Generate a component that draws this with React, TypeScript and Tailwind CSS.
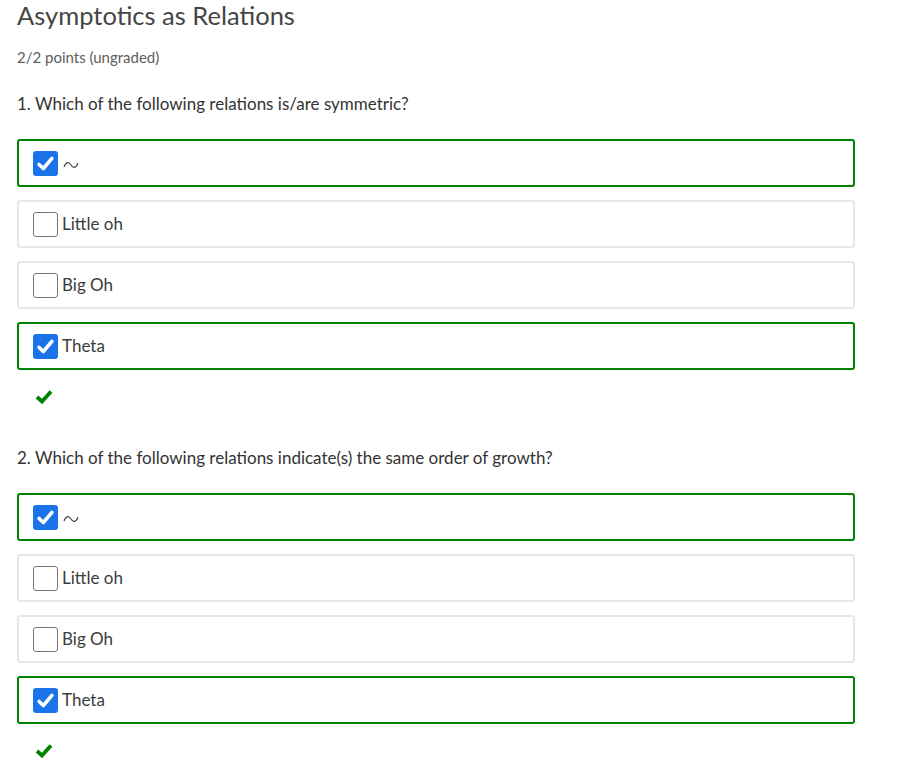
import React from "react";

type Opt = { label: string; checked: boolean; tilde?: boolean };

const q1: Opt[] = [
  { label: "~", checked: true, tilde: true },
  { label: "Little oh", checked: false },
  { label: "Big Oh", checked: false },
  { label: "Theta", checked: true },
];

function Box({ checked }: { checked: boolean }) {
  if (checked) {
    return (
      <span className="w-[25px] h-[25px] rounded-[3px] bg-[#1a73e8] flex items-center justify-center shrink-0">
        <svg width="19" height="19" viewBox="0 0 16 16">
          <path d="M2.6 8.8 L6.2 12.2 L13.4 3.6" fill="none" stroke="#fff" strokeWidth="3" strokeLinecap="round" strokeLinejoin="round" />
        </svg>
      </span>
    );
  }
  return <span className="w-[25px] h-[25px] rounded-[3px] border border-[#767676] bg-white shrink-0" />;
}

function Option({ o }: { o: Opt }) {
  return (
    <div
      className={
        "h-[48px] rounded-[3px] border-2 flex items-center pl-[14px] gap-[4px] " +
        (o.checked ? "border-[#008100]" : "border-[#e7e7e7]")
      }
    >
      <Box checked={o.checked} />
      {o.tilde ? (
        <svg width="16" height="10" viewBox="0 0 16 10" className="ml-[1px] mt-[4px]">
          <path d="M1 7 C3 1.5 6 1.5 8 5 C10 8.5 13 8.5 15 3" fill="none" stroke="#444" strokeWidth="1.1" />
        </svg>
      ) : (
        <span className="text-[17px] text-[#3c3c3c]">{o.label}</span>
      )}
    </div>
  );
}

function Check() {
  return (
    <div className="pl-[18px] mt-[18px]">
      <svg width="18" height="16" viewBox="0 0 18 16">
        <path d="M2 9 L7 13.5 L16 3.5" fill="none" stroke="#008100" strokeWidth="3.8" strokeLinecap="butt" strokeLinejoin="miter" />
      </svg>
    </div>
  );
}

function Question({ title, opts }: { title: string; opts: Opt[] }) {
  return (
    <div>
      <div className="text-[17px] text-[#333] leading-[20px]">{title}</div>
      <div className="mt-[25px] flex flex-col gap-[13px]">
        {opts.map((o, i) => (
          <Option key={i} o={o} />
        ))}
      </div>
      <Check />
    </div>
  );
}

export default function App() {
  return (
    <div className="w-[901px] h-[763px] bg-white overflow-hidden" style={{ fontFamily: '"Lato", "Noto Sans", sans-serif' }}>
      <div className="w-[838px] ml-[17px]">
        <h1 className="text-[25.5px] leading-[30px] text-[#454545]">Asymptotics as Relations</h1>
        <div className="text-[15px] text-[#5e5e5e] mt-[18px] leading-[18px]">2/2 points (ungraded)</div>
        <div className="mt-[28px]">
          <Question title="1. Which of the following relations is/are symmetric?" opts={q1} />
        </div>
        <div className="mt-[44px]">
          <Question title="2. Which of the following relations indicate(s) the same order of growth?" opts={q1} />
        </div>
      </div>
    </div>
  );
}
